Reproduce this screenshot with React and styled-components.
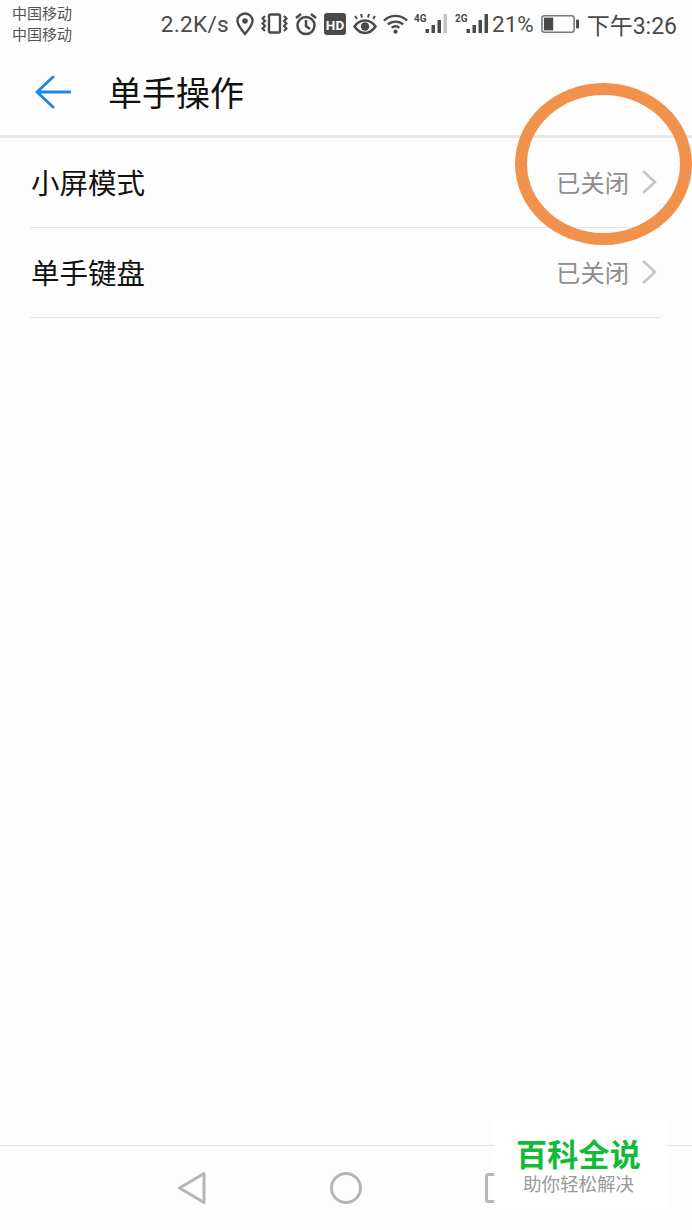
import React from "react"
import styled, { createGlobalStyle } from "styled-components"

const Global = createGlobalStyle`
    html, body {
        margin: 0;
        padding: 0;
        background: #fdfdfd;
    }
`

const CJK = `"Roboto", "Noto Sans CJK SC", sans-serif`

const Page = styled.div`
    position: relative;
    width: 692px;
    height: 1230px;
    overflow: hidden;
    display: flex;
    flex-direction: column;
    background: #fdfdfd;
    font-family: ${CJK};
`

const StatusBar = styled.div`
    height: 46px;
    display: flex;
    align-items: flex-start;
    justify-content: space-between;
    padding: 3px 15px 0 12px;
    box-sizing: border-box;
    color: #4a4a4a;
`

const Carriers = styled.div`
    display: flex;
    flex-direction: column;
    font-size: 15px;
    line-height: 21px;
    width: 62px;
    padding-top: 1px;
    color: #555;
`

const StatusRight = styled.div`
    display: flex;
    align-items: center;
    height: 42px;
`

const Speed = styled.span`
    font-size: 22.6px;
    letter-spacing: 0.3px;
    margin-right: 6px;
`

const StatusIcon = styled.svg`
    display: block;
    flex: none;
    margin-right: ${p => p.$gap ?? 5}px;
`

const Percent = styled.span`
    font-size: 22.4px;
    margin-right: 7px;
`

const Clock = styled.span`
    font-size: 23px;
    margin-left: 8px;
`

const Header = styled.div`
    height: 86px;
    padding-top: 3px;
    display: flex;
    align-items: center;
    padding-left: 35px;
    border-bottom: 3px solid #e6e6e6;
`

const BackIcon = styled.svg`
    display: block;
    margin-right: 37px;
`

const Title = styled.h1`
    margin: 3px 0 0;
    font-size: 34px;
    font-weight: 400;
    color: #111;
    line-height: 1;
    letter-spacing: 0;
`

const List = styled.div`
    display: flex;
    flex-direction: column;
    padding: 0 31px 0 30px;
`

const Row = styled.div`
    height: 89px;
    display: flex;
    align-items: center;
    justify-content: space-between;
    border-bottom: 1px solid #e3e3e3;
`

const RowLabel = styled.span`
    font-size: 28.5px;
    color: #111;
    line-height: 1;
    padding: 6px 0 0 1px;
`

const RowValue = styled.div`
    display: flex;
    align-items: center;
    margin-right: 4px;
    gap: 12px;
`

const ValueText = styled.span`
    font-size: 24.3px;
    color: #8d8d8d;
    line-height: 1;
    padding-top: 3px;
`

const Spacer = styled.div`
    flex: 1;
`

const NavBar = styled.div`
    height: 83px;
    border-top: 1px solid #e4e4e4;
    display: flex;
    align-items: center;
    justify-content: center;
    gap: 123px;
    padding-bottom: 1px;
    padding-left: 1px;
`

const Ring = styled.div`
    position: absolute;
    left: 515px;
    top: 83px;
    width: 177px;
    height: 162px;
    box-sizing: border-box;
    border: 12px solid #f0924c;
    border-radius: 50%;
`

const Watermark = styled.div`
    position: absolute;
    left: 494px;
    top: 1120px;
    width: 173px;
    height: 88px;
    background: #fff;
    display: flex;
    flex-direction: column;
    align-items: center;
    padding: 20px 4px 0 0;
    box-sizing: border-box;
`

const MarkTitle = styled.div`
    font-size: 31px;
    font-weight: 700;
    color: #12bb37;
    line-height: 1;
    letter-spacing: 0.3px;
`

const MarkSub = styled.div`
    font-size: 18.5px;
    color: #999;
    line-height: 1;
    margin-top: 5px;
`

const Chevron = () => (
    <svg width="16" height="26" viewBox="0 0 16 26" fill="none">
        <path d="M2 2l12 11L2 24" stroke="#c6c6c6" strokeWidth="2.6" />
    </svg>
)

const Signal = ({ label, last }) => (
    <StatusIcon width={last ? 34 : 33} height="22" viewBox={`0 0 ${last ? 34 : 33} 22`} $gap={last ? 3 : 8}>
        <text x="0" y="9" fontSize="10" fontWeight="700" fontFamily="Roboto, sans-serif" fill="#4a4a4a">{label}</text>
        <rect x="11.500" y="16" width="3.500" height="4" fill="#4a4a4a" />
        <rect x="17.500" y="12" width="3.500" height="8" fill="#4a4a4a" />
        <rect x="23.500" y="7" width="3.500" height="13" fill="#4a4a4a" />
        <rect x="29.500" y="1" width="3.500" height="19" fill={last ? "#4a4a4a" : "#c4c4c4"} />
    </StatusIcon>
)

const App = () => (
    <Page>
        <Global />
        <StatusBar>
            <Carriers>
                <span>中国移动</span>
                <span>中国移动</span>
            </Carriers>
            <StatusRight>
                <Speed>2.2K/s</Speed>
                <StatusIcon width="20" height="24" viewBox="0 0 20 24" fill="none" $gap={6}>
                    <path d="M10 22C5 16 2.5 12.5 2.5 9a7.5 7.5 0 0 1 15 0c0 3.500-2.500 7-7.500 13z" stroke="#4a4a4a" strokeWidth="2.400" />
                    <circle cx="10" cy="9" r="2.800" fill="#4a4a4a" />
                </StatusIcon>
                <StatusIcon width="27" height="22" viewBox="0 0 27 22" fill="none" $gap={6}>
                    <rect x="8" y="1.500" width="11" height="18" rx="1.500" stroke="#4a4a4a" strokeWidth="2.400" />
                    <path d="M4 3L1.500 5.500 4 8 1.500 10.500 4 13l-2.500 2.500L4 18M23 3l2.500 2.500L23 8l2.500 2.500L23 13l2.500 2.500L23 18" stroke="#4a4a4a" strokeWidth="2.200" />
                </StatusIcon>
                <StatusIcon width="24" height="24" viewBox="0 0 24 24" fill="none" $gap={6}>
                    <circle cx="12" cy="13.500" r="8.500" stroke="#4a4a4a" strokeWidth="2.500" />
                    <path d="M12 8v6l4 3M2 6l5-4M22 6l-5-4" stroke="#4a4a4a" strokeWidth="2.500" />
                </StatusIcon>
                <StatusIcon width="22" height="22" viewBox="0 0 22 22" $gap={7}>
                    <rect x="0" y="0" width="22" height="22" rx="3" fill="#4a4a4a" />
                    <text x="11" y="16.500" textAnchor="middle" fontSize="13.500" fontWeight="700" fontFamily="Roboto, sans-serif" fill="#fff">HD</text>
                </StatusIcon>
                <StatusIcon width="24" height="24" viewBox="0 0 24 24" fill="none" $gap={6}>
                    <path d="M1.500 14.500C5 9.500 8 8.500 12 8.500s7 1 10.500 6c-3.500 5-6.500 6.500-10.500 6.500s-7-1.500-10.500-6.500z" stroke="#4a4a4a" strokeWidth="2.600" />
                    <circle cx="12" cy="14.500" r="4.200" fill="#4a4a4a" />
                    <path d="M4 7L2 4M9 5.500L8 2M15 5.500l1-3.500M20 7l2-3" stroke="#4a4a4a" strokeWidth="2" />
                </StatusIcon>
                <StatusIcon width="25" height="22" viewBox="0 0 26 22" fill="none" $gap={6}>
                    <path d="M1 7.500c7-6.500 17-6.500 24 0M5 11.500c4.500-4 11.500-4 16 0M9 15c2.500-2 5.500-2 8 0" stroke="#4a4a4a" strokeWidth="2.400" />
                    <circle cx="13" cy="19" r="2.200" fill="#4a4a4a" />
                </StatusIcon>
                <Signal label="4G" />
                <Signal label="2G" last />
                <Percent>21%</Percent>
                <StatusIcon width="38" height="20" viewBox="0 0 39 20" fill="none" $gap={0}>
                    <rect x="1" y="1.500" width="33" height="17" rx="2.500" stroke="#777" strokeWidth="1.600" />
                    <rect x="3" y="3.500" width="9.500" height="13" fill="#4a4a4a" />
                    <rect x="36" y="5.500" width="3" height="9" rx="1" fill="#4a4a4a" />
                </StatusIcon>
                <Clock>下午3:26</Clock>
            </StatusRight>
        </StatusBar>
        <Header>
            <BackIcon width="36" height="34" viewBox="0 0 36 34" fill="none">
                <path d="M18 2L2 17l16 15M2 17h33" stroke="#1e88e5" strokeWidth="3" strokeLinecap="round" strokeLinejoin="round" />
            </BackIcon>
            <Title>单手操作</Title>
        </Header>
        <List>
            <Row>
                <RowLabel>小屏模式</RowLabel>
                <RowValue>
                    <ValueText>已关闭</ValueText>
                    <Chevron />
                </RowValue>
            </Row>
            <Row>
                <RowLabel>单手键盘</RowLabel>
                <RowValue>
                    <ValueText>已关闭</ValueText>
                    <Chevron />
                </RowValue>
            </Row>
        </List>
        <Spacer />
        <NavBar>
            <svg width="30" height="34" viewBox="0 0 30 34" fill="none">
                <path d="M27 2.500L2.500 17 27 31.500z" stroke="#b5b5b5" strokeWidth="3" strokeLinejoin="round" />
            </svg>
            <svg width="32" height="32" viewBox="0 0 32 32" fill="none">
                <circle cx="16" cy="16" r="14.500" stroke="#b5b5b5" strokeWidth="3" />
            </svg>
            <svg width="32" height="30" viewBox="0 0 32 30" fill="none">
                <rect x="1.500" y="1.500" width="29" height="27" rx="2" stroke="#b5b5b5" strokeWidth="3" />
            </svg>
        </NavBar>
        <Ring />
        <Watermark>
            <MarkTitle>百科全说</MarkTitle>
            <MarkSub>助你轻松解决</MarkSub>
        </Watermark>
    </Page>
)

export default App
